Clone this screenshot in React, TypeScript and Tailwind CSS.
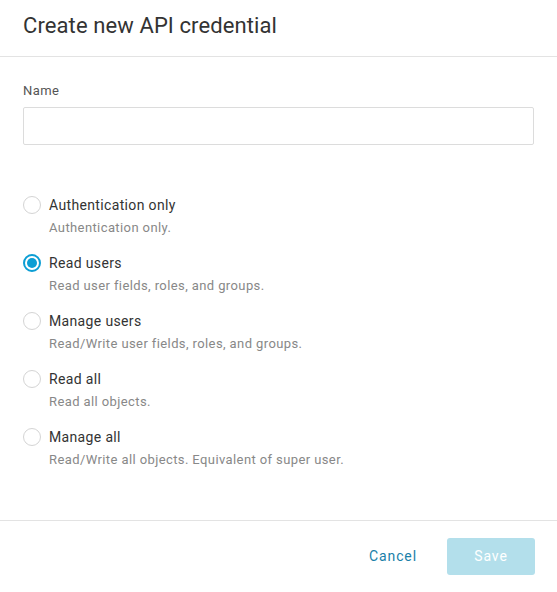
import { useState } from "react";

const scopes = [
  { id: "auth", label: "Authentication only", desc: "Authentication only." },
  { id: "read_users", label: "Read users", desc: "Read user fields, roles, and groups." },
  { id: "manage_users", label: "Manage users", desc: "Read/Write user fields, roles, and groups." },
  { id: "read_all", label: "Read all", desc: "Read all objects." },
  { id: "manage_all", label: "Manage all", desc: "Read/Write all objects. Equivalent of super user." },
];

export default function App() {
  const [name, setName] = useState("");
  const [scope, setScope] = useState("read_users");

  return (
    <div className="w-[557px] h-[592px] bg-white flex flex-col font-['Roboto',sans-serif] text-[#333]">
      <div className="h-[57px] px-[23px] flex items-center border-b border-[#e3e3e3]">
        <h1 className="text-[22px] text-[#333] leading-none -mt-[4px] tracking-[0.1px]">Create new API credential</h1>
      </div>

      <div className="flex-1 px-[23px] pt-[26px]">
        <label className="block text-[13px] text-[#555] leading-[16px] mb-[8px] tracking-[0.4px]">Name</label>
        <input
          value={name}
          onChange={(e) => setName(e.target.value)}
          className="w-full h-[38px] border border-[#dcdcdc] rounded-[2px] px-3 text-[14px] outline-none"
        />

        <div className="mt-[50px] flex flex-col gap-[16px]">
          {scopes.map((s) => {
            const checked = scope === s.id;
            return (
              <div key={s.id} className="flex cursor-pointer" onClick={() => setScope(s.id)}>
                <div
                  className={
                    checked
                      ? "w-[18px] h-[18px] mt-[1px] rounded-full border-2 border-[#0c9ed4] flex items-center justify-center shrink-0"
                      : "w-[18px] h-[18px] mt-[1px] rounded-full border border-[#d4d4d4] shrink-0"
                  }
                >
                  {checked && <div className="w-[10px] h-[10px] rounded-full bg-[#0c9ed4]" />}
                </div>
                <div className="ml-[8px]">
                  <div className="text-[14px] leading-[20px] text-[#333] tracking-[0.35px]">{s.label}</div>
                  <div className="mt-[4px] text-[13px] leading-[18px] text-[#888] tracking-[0.4px]">{s.desc}</div>
                </div>
              </div>
            );
          })}
        </div>
      </div>

      <div className="h-[71px] border-t border-[#e3e3e3] px-[22px] flex items-center justify-end gap-[30px] mb-[1px]">
        <button className="text-[14px] text-[#1a7fa8] tracking-[0.9px]">Cancel</button>
        <button className="w-[88px] h-[37px] rounded-[3px] bg-[#b3dfeb] text-white text-[14px] tracking-[0.9px]">
          Save
        </button>
      </div>
    </div>
  );
}
